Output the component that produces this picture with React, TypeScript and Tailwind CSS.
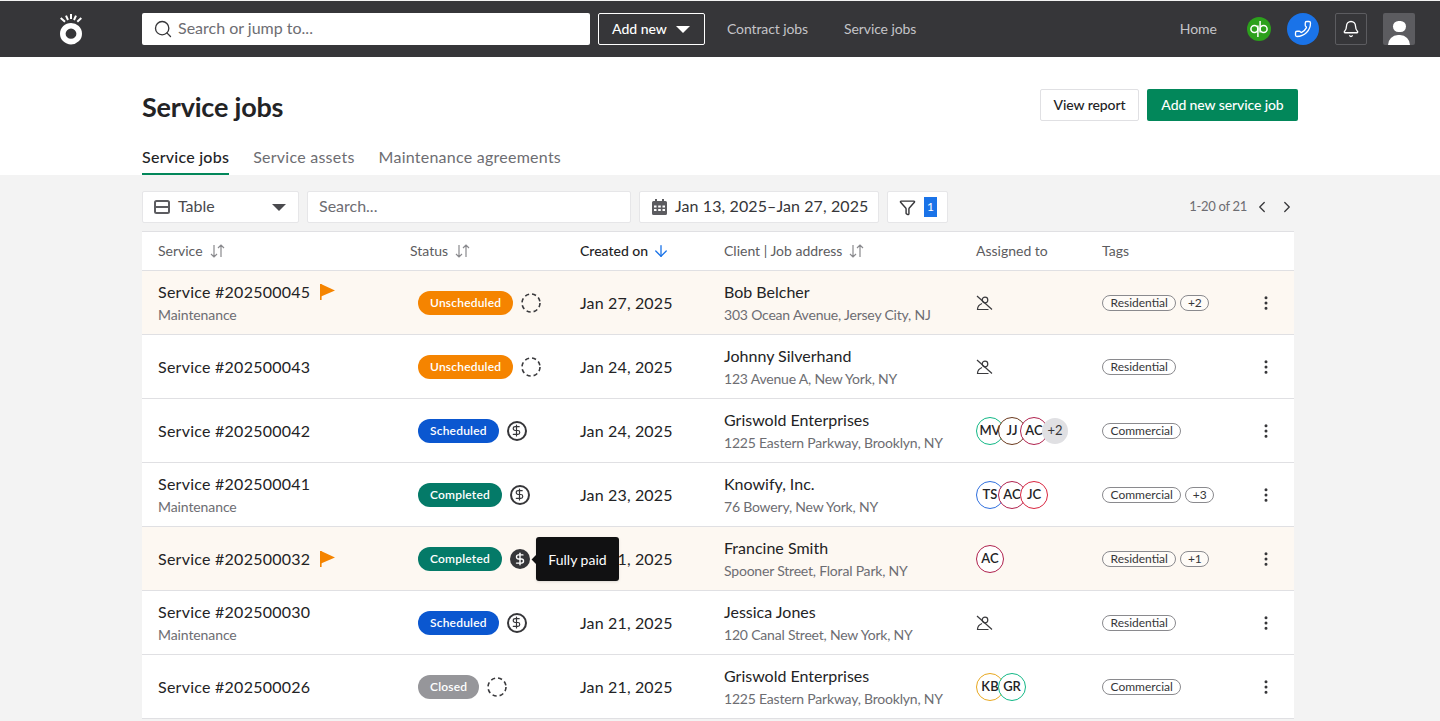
import { Search, Bell, Phone, ChevronLeft, ChevronRight, ArrowDown, Funnel, EllipsisVertical, DollarSign } from "lucide-react";

type Job = {
  id: string;
  sub?: string;
  flag?: boolean;
  status: "Unscheduled" | "Scheduled" | "Completed" | "Closed";
  pay: "none" | "dollar" | "paid";
  date: string;
  client: string;
  address: string;
  people: [string, string][];
  more?: string;
  tag: string;
  tagMore?: string;
};

const jobs: Job[] = [
  { id: "202500045", sub: "Maintenance", flag: true, status: "Unscheduled", pay: "none", date: "Jan 27, 2025", client: "Bob Belcher", address: "303 Ocean Avenue, Jersey City, NJ", people: [], tag: "Residential", tagMore: "+2" },
  { id: "202500043", status: "Unscheduled", pay: "none", date: "Jan 24, 2025", client: "Johnny Silverhand", address: "123 Avenue A, New York, NY", people: [], tag: "Residential" },
  { id: "202500042", status: "Scheduled", pay: "dollar", date: "Jan 24, 2025", client: "Griswold Enterprises", address: "1225 Eastern Parkway, Brooklyn, NY", people: [["MV", "border-[#12b886]"], ["JJ", "border-[#6b3a1e]"], ["AC", "border-[#b0224e]"]], more: "+2", tag: "Commercial" },
  { id: "202500041", sub: "Maintenance", status: "Completed", pay: "dollar", date: "Jan 23, 2025", client: "Knowify, Inc.", address: "76 Bowery, New York, NY", people: [["TS", "border-[#2f6fde]"], ["AC", "border-[#b0224e]"], ["JC", "border-[#d9253f]"]], tag: "Commercial", tagMore: "+3" },
  { id: "202500032", flag: true, status: "Completed", pay: "paid", date: "Jan 21, 2025", client: "Francine Smith", address: "Spooner Street, Floral Park, NY", people: [["AC", "border-[#b0224e]"]], tag: "Residential", tagMore: "+1" },
  { id: "202500030", sub: "Maintenance", status: "Scheduled", pay: "dollar", date: "Jan 21, 2025", client: "Jessica Jones", address: "120 Canal Street, New York, NY", people: [], tag: "Residential" },
  { id: "202500026", status: "Closed", pay: "none", date: "Jan 21, 2025", client: "Griswold Enterprises", address: "1225 Eastern Parkway, Brooklyn, NY", people: [["KB", "border-[#e8a820]"], ["GR", "border-[#12b886]"]], tag: "Commercial" },
];

const statusColor = {
  Unscheduled: "bg-[#f58400]",
  Scheduled: "bg-[#0b57d0]",
  Completed: "bg-[#047a68]",
  Closed: "bg-[#96969a]",
};

function SortIcon() {
  return (
    <svg width="15" height="14" viewBox="0 0 15 14" fill="none" stroke="#8a8a8e" strokeWidth="1.2">
      <path d="M4 1v12M1 10l3 3 3-3M11 13V1M8 4l3-3 3 3" />
    </svg>
  );
}

function UnassignedIcon() {
  return (
    <svg width="17" height="16" viewBox="0 0 17 16" fill="none" stroke="#3a3a3d" strokeWidth="1.2" className="mt-px">
      <path d="M1 1L16 14.5" />
      <circle cx="9" cy="5" r="2.8" />
      <path d="M6 8.5C3.2 9.6 1.5 11.6 1.5 14.5H12.5" />
    </svg>
  );
}

function Logo() {
  return (
    <svg width="26" height="32" viewBox="0 0 26 32" fill="none" stroke="white">
      <path d="M2.7 5L7 8.7M8 2.7L10 7M13 1V6M18 2.7L16 7M23.3 5L19.3 8.7" strokeWidth="2" />
      <ellipse cx="13" cy="20.7" rx="8.2" ry="7.9" strokeWidth="5.6" />
    </svg>
  );
}

function QbIcon() {
  return (
    <div className="w-6 h-6 rounded-full bg-[#2ca01c] flex items-center justify-center">
      <svg width="24" height="24" viewBox="0 0 24 24" fill="none" stroke="white" strokeWidth="1.5">
        <circle cx="7.400" cy="12" r="3.500" />
        <path d="M10.900 8.500V20" />
        <circle cx="16.600" cy="12" r="3.500" />
        <path d="M13.100 4V15.500" />
      </svg>
    </div>
  );
}

function CalendarIcon() {
  return (
    <svg width="15" height="16" viewBox="0 0 15 16" fill="#5c5c60">
      <path d="M3 0h2v2h5V0h2v2h1.500A1.500 1.500 0 0115 3.500V14.500A1.500 1.500 0 0113.500 16H1.500A1.500 1.500 0 010 14.500V3.500A1.500 1.500 0 011.500 2H3z" />
      <path fill="white" d="M2 6.500h2.500V8.500H2zM6.200 6.500h2.600V8.500H6.200zM10.500 6.500H13V8.500H10.500zM2 10h2.500v2H2zM6.200 10h2.600v2H6.200zM10.500 10H13v2H10.500z" />
    </svg>
  );
}

function PayIcon({ pay }: { pay: Job["pay"] }) {
  if (pay === "none") {
    return (
      <svg width="20" height="20" viewBox="0 0 20 20" fill="none" stroke="#3a3a3d" strokeWidth="1.6">
        <circle cx="10" cy="10" r="9" strokeDasharray="4.2 3" />
      </svg>
    );
  }
  if (pay === "paid") {
    return (
      <div className="w-5 h-5 rounded-full bg-[#363639] flex items-center justify-center">
        <DollarSign size={14} color="white" strokeWidth={2.4} />
      </div>
    );
  }
  return (
    <div className="w-5 h-5 rounded-full border-2 border-[#363639] flex items-center justify-center">
      <DollarSign size={13} color="#363639" strokeWidth={2.2} />
    </div>
  );
}

function Tag({ children }: { children: string }) {
  return <span className={`h-4 rounded-full border border-[#8a8a8e] flex items-center text-[12px] text-[#363639] bg-white/40 ${children.startsWith("+") ? "px-[6.5px]" : "px-[7.5px]"}`}>{children}</span>;
}

function Row({ job }: { job: Job }) {
  return (
    <div className={`relative grid grid-cols-[268px_170px_144px_252px_126px_1fr] items-center h-16 border-b border-[#e0e0e3] ${job.flag ? "bg-[#fdf8f2]" : "bg-white"}`}>
      <div className={`pl-4 ${job.sub ? "pt-[2px]" : ""}`}>
        <div className="flex items-center gap-[10px] text-[16px] leading-[22px] tracking-[0.25px] text-[#232325]">
          <span>Service #{job.id}</span>
          {job.flag && (
            <svg width="15" height="16" viewBox="0 0 15 16">
              <path d="M0 0h1.600v16H0z" fill="#f58400" />
              <path d="M1 0l14 6.500L1 12.500z" fill="#f58400" />
            </svg>
          )}
        </div>
        {job.sub && <div className="mt-px text-[14px] leading-[22px] tracking-[-0.1px] text-[#6d6d72]">{job.sub}</div>}
      </div>
      <div className="pl-2 flex items-center gap-2">
        <span className={`h-6 rounded-full px-3 flex items-center text-[12px] font-semibold tracking-[0.2px] text-white ${statusColor[job.status]}`}>{job.status}</span>
        <PayIcon pay={job.pay} />
      </div>
      <div className="text-[16px] tracking-[0.15px] text-[#232325]">{job.date}</div>
      <div className="pt-[2px]">
        <div className="text-[16px] leading-[22px] text-[#232325]">{job.client}</div>
        <div className="mt-px text-[14px] leading-[22px] tracking-[-0.2px] text-[#6d6d72]">{job.address}</div>
      </div>
      <div className="flex items-center">
        {job.people.length === 0 && <UnassignedIcon />}
        {job.people.map(([name, color], i) => (
          <div key={name} className={`w-7 h-7 rounded-full border-[1.5px] bg-white flex items-center justify-center text-[13px] font-semibold text-[#232325] ${color} ${i > 0 ? "-ml-1.5" : ""}`}>{name}</div>
        ))}
        {job.more && <div className="-ml-1.5 w-[26px] h-[26px] rounded-full bg-[#e0e0e3] flex items-center justify-center text-[13px] text-[#363639]">{job.more}</div>}
      </div>
      <div className="flex items-center gap-1">
        <Tag>{job.tag}</Tag>
        {job.tagMore && <Tag>{job.tagMore}</Tag>}
      </div>
      <div className="absolute right-[19px] top-1/2 -translate-y-1/2">
        <EllipsisVertical size={18} color="#363639" strokeWidth={2} />
      </div>
      {job.pay === "paid" && (
        <div className="absolute left-[394px] top-[10px] z-10 w-[83px] h-[44px] rounded-[3px] bg-[#111112] shadow-sm flex items-center justify-center text-[14px] text-white">
          <span className="absolute -left-[3px] top-[19px] w-[7px] h-[7px] rotate-45 bg-[#111112]" />
          Fully paid
        </div>
      )}
    </div>
  );
}

export default function App() {
  return (
    <div className="h-[721px] overflow-hidden bg-[#f3f3f3] text-[#232325] font-['Lato','Noto_Sans',sans-serif]">
      <header className="mt-px h-14 bg-[#363639] flex items-center relative">
        <div className="w-[142px] flex justify-center">
          <Logo />
        </div>
        <div className="w-[448px] h-8 bg-white rounded-[2px] flex items-center pl-[11px] pb-[2px] gap-[5px] text-[#6d6d72] text-[16px]">
          <Search size={20} color="#363639" strokeWidth={1.6} className="mt-[2px]" />
          <span>Search or jump to...</span>
        </div>
        <div className="ml-2 w-[107px] h-8 border border-white rounded-[2px] flex items-center justify-between pl-[13px] pr-[14px] pb-[2px] text-[14px] text-white font-medium">
          Add new
          <span className="mt-[2px] w-0 h-0 border-x-[7px] border-x-transparent border-t-[7px] border-t-white" />
        </div>
        <span className="ml-[22px] pb-[2px] text-[14px] tracking-[-0.1px] text-[#c4c4c8]">Contract jobs</span>
        <span className="ml-9 pb-[2px] text-[14px] tracking-[-0.1px] text-[#c4c4c8]">Service jobs</span>
        <div className="ml-auto flex items-center pr-[25px]">
          <span className="pb-[2px] text-[14px] text-[#c4c4c8] mr-[30px]">Home</span>
          <QbIcon />
          <div className="ml-4 w-8 h-8 rounded-full bg-[#1a73e8] flex items-center justify-center">
            <Phone size={18} color="white" strokeWidth={1.75} className="-scale-x-100" />
          </div>
          <div className="ml-4 w-8 h-8 rounded-[2px] border border-[#5c5c60] flex items-center justify-center">
            <Bell size={18} color="white" strokeWidth={1.75} />
          </div>
          <div className="ml-4 w-8 h-8 rounded-[2px] bg-[#5c5c60] overflow-hidden flex flex-col items-center">
            <div className="mt-2 w-[13px] h-[13px] rounded-full bg-white" />
            <div className="mt-[3px] w-[22px] h-3 rounded-t-full bg-white" />
          </div>
        </div>
      </header>

      <section className="bg-white h-[118px] px-[142px] flex flex-col">
        <div className="flex items-start justify-between">
          <h1 className="mt-8 text-[27px] leading-9 font-bold tracking-[-0.2px] text-[#232325]">Service jobs</h1>
          <div className="mt-8 flex gap-2">
            <button className="h-8 w-[99px] pb-[2px] rounded-[2px] border border-[#e0e0e3] bg-white text-[14px] font-medium tracking-[-0.1px]">View report</button>
            <button className="h-8 w-[151px] pb-[2px] rounded-[2px] bg-[#02875a] text-white text-[14px] font-medium tracking-[-0.1px]">Add new service job</button>
          </div>
        </div>
        <div className="mt-auto flex gap-6 text-[16px] tracking-[0.25px] text-[#6d6d72]">
          <div className="pb-1 border-b-2 border-[#02875a] text-[#232325] font-medium">Service jobs</div>
          <div>Service assets</div>
          <div>Maintenance agreements</div>
        </div>
      </section>

      <div className="px-[142px]">
        <div className="mt-4 flex items-center h-8 gap-2">
          <div className="w-[157px] h-8 bg-white rounded-[2px] border border-[#e6e6e8] flex items-center pl-[11px] pr-3 pb-[2px] text-[16px] text-[#4a4a4e]">
            <svg width="16" height="14" viewBox="0 0 16 14" fill="none" stroke="#5c5c60" strokeWidth="2" className="mt-[2px]"><rect x="1" y="1" width="14" height="12" rx="1.5" /><path d="M1 7h14" /></svg>
            <span className="ml-2">Table</span>
            <span className="ml-auto mt-[2px] w-0 h-0 border-x-[7px] border-x-transparent border-t-[7px] border-t-[#4a4a4e]" />
          </div>
          <div className="w-[324px] h-8 bg-white rounded-[2px] border border-[#e6e6e8] flex items-center pl-[11px] pb-[2px] text-[16px] text-[#6d6d72]">Search...</div>
          <div className="w-[240px] h-8 bg-white rounded-[2px] border border-[#e6e6e8] flex items-center pl-3 gap-2 text-[16px] tracking-[0.1px] text-[#363639]">
            <CalendarIcon />
            <span className="pb-[2px]">Jan 13, 2025–Jan 27, 2025</span>
          </div>
          <div className="w-[61px] h-8 bg-white rounded-[2px] border border-[#e6e6e8] flex items-center pl-[11px] gap-2">
            <Funnel size={17} color="#363639" />
            <span className="w-[13px] h-5 bg-[#1a73e8] text-white text-[12px] flex items-center justify-center">1</span>
          </div>
          <div className="ml-auto flex items-center pr-[2px] text-[13px] tracking-[-0.3px] text-[#6d6d72]">
            <span className="mr-[6px]">1-20 of 21</span>
            <ChevronLeft size={18} color="#363639" strokeWidth={1.75} />
            <ChevronRight size={18} color="#363639" strokeWidth={1.75} className="ml-[7px]" />
          </div>
        </div>

        <div className="mt-2 w-[1152px] border-t border-[#e0e0e3]">
          <div className="grid grid-cols-[268px_170px_144px_252px_126px_1fr] items-center h-[39px] bg-white border-b border-[#e0e0e3] text-[14px] text-[#5c5c60]">
            <div className="pl-4 flex items-center gap-[7px]"><span className="pb-[2px]">Service</span> <SortIcon /></div>
            <div className="flex items-center gap-[7px]"><span className="pb-[2px]">Status</span> <SortIcon /></div>
            <div className="flex items-center gap-1 font-medium text-[#232325]"><span className="pb-[2px]">Created on</span> <ArrowDown size={18} color="#1a73e8" strokeWidth={1.75} /></div>
            <div className="flex items-center gap-[7px]"><span className="pb-[2px]">Client | Job address</span> <SortIcon /></div>
            <div className="pb-[2px]">Assigned to</div>
            <div className="pb-[2px]">Tags</div>
          </div>
          {jobs.map((job) => (
            <Row key={job.id} job={job} />
          ))}
        </div>
      </div>
    </div>
  );
}
